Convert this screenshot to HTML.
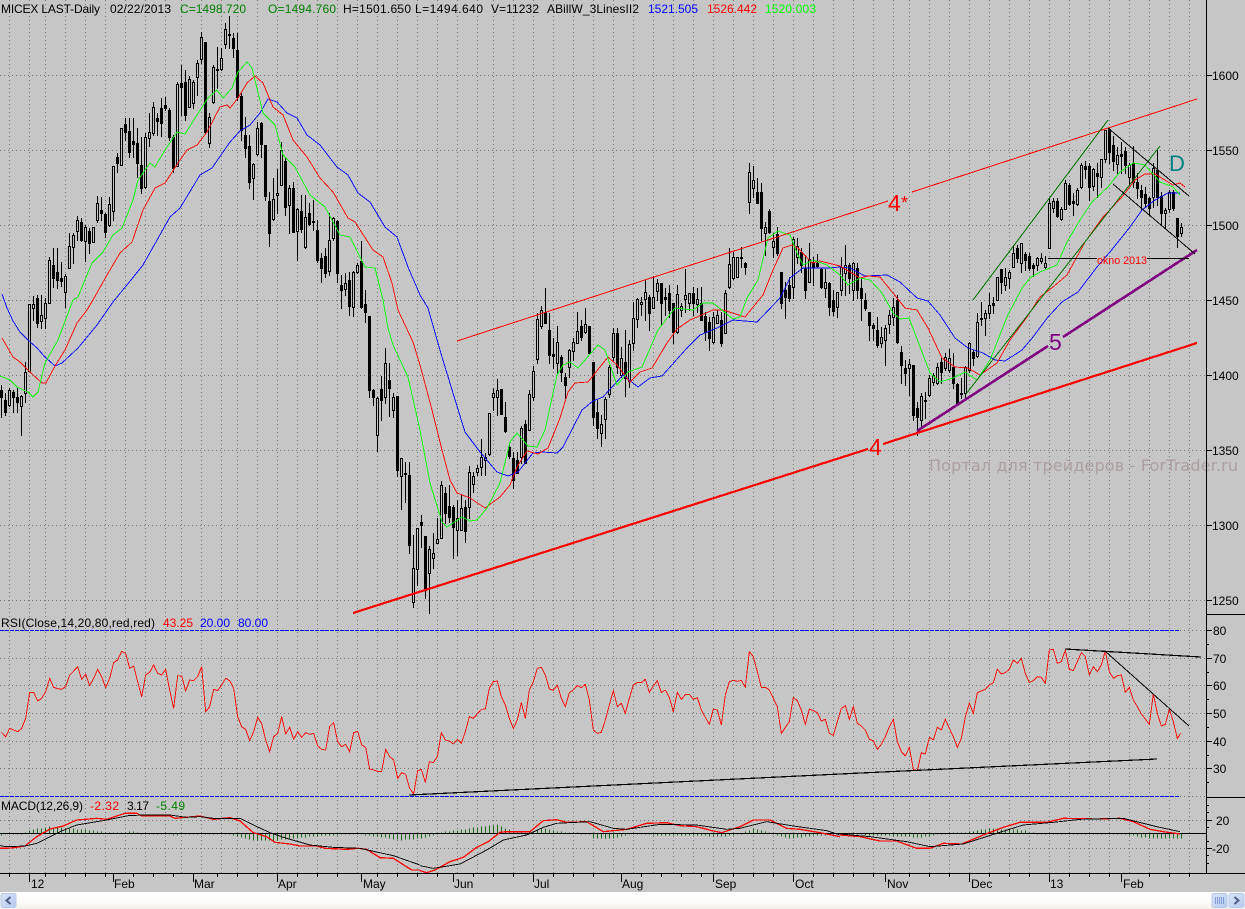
<!DOCTYPE html>
<html><head><meta charset="utf-8"><title>MICEX</title>
<style>
html,body{margin:0;padding:0;background:#c6c6c6;width:1245px;height:909px;overflow:hidden}
svg{display:block;position:absolute;left:0;top:0}
text{font-family:"Liberation Sans",Arial,sans-serif;font-size:12px}
.c{shape-rendering:crispEdges}
polyline{fill:none;shape-rendering:crispEdges;stroke-width:.9}
.z polyline{vector-effect:non-scaling-stroke}
</style></head><body>
<svg width="1245" height="909" viewBox="0 0 1245 909" xmlns="http://www.w3.org/2000/svg">
<rect width="1245" height="909" fill="#c6c6c6"/>
<path id="grid" class="c" fill="none" stroke="#777" stroke-width="1" stroke-dasharray="1 3"/>
<path id="hgrid" class="c" fill="none" stroke="#777" stroke-width="1" stroke-dasharray="1 3"/>
<path id="wick" class="c" fill="none" stroke="#000" stroke-width="1"/>
<path id="hollow" class="c" fill="#c6c6c6" stroke="#000" stroke-width="1"/>
<path id="solid" class="c" fill="#000"/>

<!-- moving averages -->
<polyline stroke="#0000ff" points="2,294 7,308 13,321 20,332 28,340 37,348 45,357 55,366 62,363 78,348 97,325 113,302 131,280 143,265 170,217 180,208 200,175 212,168 230,142 240,131 250,125 260,113 268,99 277,102 287,113 297,118 307,135 320,145 337,167 348,175 358,193 370,202 385,227 397,237 408,267 420,295 428,308 442,357 453,393 465,432 480,452 497,472 508,476 518,472 533,453 542,452 557,453 563,447 582,410 593,401 603,397 623,375 638,387 650,378 662,376 687,348 700,335 717,328 733,320 757,322 780,298 790,278 803,268 817,268 828,268 840,267 850,268 865,276 887,275 900,282 917,298 928,301 940,315 955,338 968,348 983,353 995,360 1005,361 1022,350 1033,337 1048,317 1062,302 1078,292 1097,267 1110,252 1130,227 1142,210 1155,200 1168,193 1180,193"/>
<polyline stroke="#ff0000" points="2,338 13,357 20,362 30,372 42,383 46,383 55,366 65,350 77,323 87,310 93,300 107,275 120,253 132,242 143,210 155,188 165,183 180,160 187,150 197,145 207,132 220,107 227,105 230,108 238,98 247,83 255,76 263,83 273,107 283,115 293,140 307,157 320,178 333,192 348,218 355,222 373,250 383,257 392,283 398,310 413,342 420,365 432,410 442,450 450,480 457,493 470,498 485,508 500,497 510,485 517,467 527,451 538,454 548,448 560,418 568,392 575,383 588,382 608,357 617,365 630,382 640,372 652,368 667,343 677,329 690,320 713,310 723,310 745,317 763,295 773,270 783,248 792,245 798,248 812,263 820,261 840,266 860,278 868,276 880,277 897,298 905,308 917,310 928,328 942,358 955,367 968,368 980,375 997,363 1010,340 1027,317 1040,297 1053,287 1067,275 1085,242 1103,217 1122,197 1135,180 1145,174 1155,174 1173,185 1180,183 1185,187"/>
<polyline stroke="#00ff00" points="0,376 10,380 17,387 28,392 33,397 38,392 45,363 58,340 73,300 78,297 87,275 92,263 103,252 113,235 122,228 133,200 138,180 150,163 155,167 165,150 177,132 185,134 197,115 208,98 217,90 223,98 232,88 238,72 247,62 252,68 263,113 275,125 283,155 295,167 310,195 325,207 340,235 350,237 365,267 375,268 383,300 388,328 393,345 408,377 420,430 430,483 442,522 447,527 462,517 470,521 477,520 487,508 500,483 510,442 517,433 528,446 537,447 545,430 557,375 563,365 570,362 578,368 598,345 605,350 617,385 628,372 642,367 658,330 675,308 693,310 703,303 713,303 733,319 740,317 747,298 758,280 768,238 778,231 790,235 797,253 803,265 813,260 827,265 840,275 848,285 860,278 870,280 882,293 893,313 900,319 909,318 930,373 940,382 953,378 965,372 977,380 990,360 1007,317 1022,288 1030,278 1040,272 1057,265 1067,242 1080,220 1092,202 1107,188 1120,172 1133,163 1145,165 1160,182 1173,187 1180,195"/>

<!-- trendlines -->
<g class="c" fill="none">
<path d="M457 341L888 201M912 192L1197 99" stroke="#ff0000" stroke-width="1"/>
<path d="M353 613L868 449M883 444L1197 343" stroke="#ff0000" stroke-width="2.2"/>
<path d="M917 431L1048 346M1063 337L1197 250" stroke="#800080" stroke-width="2.6"/>
<path d="M973 300L1108 120M966 394L1160 146" stroke="#007000" stroke-width="1"/>
<path d="M1108 128L1189 196M1113 184L1195 254" stroke="#000" stroke-width="1"/>
<path d="M1048 258.500H1097M1147 258.500H1189" stroke="#000" stroke-width="1"/>
</g>
<text x="888" y="211" font-size="22" style="font-size:23px" fill="#ff0000">4</text>
<text x="901" y="209" style="font-size:18px" fill="#ff0000">*</text>
<text x="869" y="455" style="font-size:23px" fill="#ff0000">4</text>
<text x="1049" y="350" style="font-size:23px" fill="#800080">5</text>
<text x="1169" y="171" style="font-size:22px" fill="#008080">D</text>
<text x="1097" y="264" textLength="50" lengthAdjust="spacingAndGlyphs" style="font-size:11px" fill="#ff0000">okno 2013</text>
<text x="929" y="471" textLength="309" lengthAdjust="spacing" style="font-size:16px;font-family:'DejaVu Sans','Liberation Sans',sans-serif" fill="#ad9f9f">Портал для трейдеров - ForTrader.ru</text>

<!-- header -->
<text x="1" y="13" textLength="99">MICEX LAST-Daily</text>
<text x="110" y="13" textLength="61">02/22/2013</text>
<text x="180" y="13" textLength="66" fill="#008000">C=1498.720</text>
<text x="268" y="13" textLength="68" fill="#008000">O=1494.760</text>
<text x="343" y="13" textLength="68">H=1501.650</text>
<text x="415" y="13" textLength="68">L=1494.640</text>
<text x="491" y="13" textLength="48">V=11232</text>
<text x="547" y="13" textLength="92">ABillW_3LinesII2</text>
<text x="648" y="13" textLength="50" fill="#0000ff">1521.505</text>
<text x="707" y="13" textLength="50" fill="#ff0000">1526.442</text>
<text x="765" y="13" textLength="51" fill="#00ff00">1520.003</text>

<!-- RSI panel -->
<g class="c" stroke="#0000ff" stroke-dasharray="4 1"><path d="M0 630.500H1180M0 796.500H1180"/></g>
<text x="1" y="627" textLength="154">RSI(Close,14,20,80,red,red)</text>
<text x="163" y="627" textLength="30" fill="#ff0000">43.25</text>
<text x="200" y="627" textLength="30" fill="#0000ff">20.00</text>
<text x="238" y="627" textLength="30" fill="#0000ff">80.00</text>
<g class="z" transform="translate(0,610) scale(.33333)">
<polyline stroke="#ff0000" points="5,367 17,380 29,355 41,360 53,365 65,355 77,325 89,247 101,247 113,273 125,265 137,245 149,205 161,232 173,236 185,238 197,230 209,195 221,183 233,170 245,208 257,193 269,227 281,205 293,178 305,200 317,233 329,205 341,158 353,150 365,124 377,130 389,175 401,168 413,215 425,260 437,195 449,187 461,165 473,190 485,195 497,178 509,240 521,295 533,197 545,198 557,243 569,210 581,212 593,200 605,170 617,305 629,290 641,238 653,242 665,225 677,205 689,212 701,235 713,320 725,350 737,358 749,392 761,365 773,322 785,340 797,390 809,425 821,380 833,370 845,320 857,372 869,352 881,388 893,365 905,382 917,368 929,373 941,370 953,408 965,418 977,420 989,350 1001,338 1013,395 1025,410 1037,403 1049,425 1061,368 1073,364 1085,405 1097,412 1109,477 1121,480 1133,484 1145,484 1157,418 1169,440 1181,450 1193,505 1205,488 1217,493 1229,535 1241,552 1253,482 1264,478"/>
</g>
<g class="z" transform="translate(420,610) scale(.33333)">
<polyline stroke="#ff0000" points="4,478 16,517 28,455 40,458 52,440 64,368 76,390 88,393 100,402 112,388 124,400 136,365 148,320 160,325 172,312 184,298 196,297 208,235 220,215 232,213 244,260 256,285 268,325 280,355 292,330 304,278 316,325 328,240 340,215 352,175 364,172 376,195 388,237 400,241 412,225 424,265 436,290 448,248 460,240 472,227 484,233 496,223 508,270 520,360 532,370 544,367 556,330 568,285 580,242 592,290 604,280 616,310 628,265 640,225 652,217 664,218 676,208 688,247 700,228 712,212 724,248 736,240 748,262 760,305 772,247 784,268 796,254 808,253 820,268 832,263 844,300 856,322 868,343 880,297 892,300 904,345 916,255 928,215 940,211 952,214 964,211 976,232 988,125 1000,140 1012,185 1024,232 1036,232 1048,240 1060,265 1072,290 1084,370 1096,352 1108,335 1120,262 1132,272 1144,300 1156,343 1168,297 1180,302 1192,308 1204,333 1216,328 1228,370 1240,376 1252,335 1264,295"/>
</g>
<g class="z" transform="translate(840,610) scale(.33333)">
<polyline stroke="#ff0000" points="4,295 16,287 28,328 40,290 52,340 64,348 76,360 88,388 100,392 112,418 124,403 136,380 148,350 160,328 172,395 184,425 196,438 208,412 220,478 232,482 244,428 256,432 268,382 280,390 292,352 304,360 316,328 328,355 340,380 352,412 364,385 376,320 388,280 400,310 412,248 424,243 436,238 448,225 460,218 472,178 484,192 496,188 508,178 520,150 532,160 544,145 556,190 568,218 580,212 592,200 604,202 616,220 628,120 640,118 652,160 664,155 676,120 688,178 700,182 712,155 724,128 736,140 748,195 760,170 772,185 784,165 796,122 808,185 820,205 832,197 844,195 856,247 868,232 880,270 892,290 904,312 916,327 928,343 940,252 952,310 964,348 976,343 988,298 1000,335 1012,385 1022,370"/>
</g>
<g class="c" fill="none" stroke="#000">
<path d="M409 795L840 774L1157 759" stroke-width="1.2"/>
<path d="M1065 649L1201 657" stroke-width="1.2"/>
<path d="M1105 651L1189 726" stroke-width="1"/>
</g>

<!-- MACD panel -->
<text x="1" y="810" textLength="82">MACD(12,26,9)</text>
<text x="90" y="810" textLength="29" fill="#ff0000">-2.32</text>
<text x="127" y="810" textLength="22">3.17</text>
<text x="156" y="810" textLength="29" fill="#008000">-5.49</text>
<path id="hist" class="c" fill="none" stroke="#1a6a1a" stroke-width="1"/>
<path class="c" d="M0 833.500H1206" stroke="#000" stroke-width="1"/>
<g class="z" transform="translate(0,610) scale(.33333)">
<polyline stroke="#ff0000" style="stroke-width:1.3" points="0,715 35,714 75,708 110,680 150,657 190,648 230,630 290,625 320,628 375,610 410,610 425,618 450,618 510,618 525,625 600,618 640,628 690,623 720,633 760,668 800,680 825,697 870,702 900,708 950,708 975,715 1040,718 1075,715 1100,718 1140,743 1180,745 1235,780 1260,780"/>
<polyline stroke="#000" points="0,707 20,710 75,708 110,700 180,665 230,645 290,635 320,630 385,617 430,615 510,615 560,622 600,620 640,625 720,625 760,645 810,668 860,685 930,705 1000,712 1080,715 1180,737 1260,765"/>
</g>
<g class="z" transform="translate(420,610) scale(.33333)">
<polyline stroke="#ff0000" style="stroke-width:1.3" points="0,782 20,788 45,780 90,755 130,742 170,712 205,695 240,667 260,665 330,665 370,632 410,629 440,637 500,635 550,665 620,658 680,640 740,638 780,647 830,650 880,663 905,668 960,650 1000,630 1050,630 1100,655 1140,658 1200,668 1260,680"/>
<polyline stroke="#000" points="0,767 40,775 120,762 200,720 250,690 320,675 370,652 410,640 510,635 580,655 620,658 720,643 830,645 920,658 960,655 1040,635 1120,648 1220,662 1260,675"/>
</g>
<g class="z" transform="translate(840,610) scale(.33333)">
<polyline stroke="#ff0000" style="stroke-width:1.3" points="0,675 60,680 120,693 170,693 230,715 270,715 310,700 365,702 430,675 490,652 540,637 620,637 670,625 770,627 840,625 880,635 930,658 970,665 1020,672"/>
<polyline stroke="#000" points="0,672 90,680 200,695 270,710 370,702 470,670 550,645 640,637 720,628 850,625 950,650 1020,665"/>
</g>

<!-- axes -->
<path id="axes" class="c" fill="none" stroke="#000" stroke-width="1"/>
<path class="c" d="M1206.500 0V873M0 873.500H1206M1206 873.500H1245M1206 614.500H1245M1206 797.500H1245" stroke="#000" fill="none"/>
<g>
<text x="1212" y="80">1600</text><text x="1212" y="155">1550</text><text x="1212" y="230">1500</text><text x="1212" y="305">1450</text><text x="1212" y="380">1400</text><text x="1212" y="455">1350</text><text x="1212" y="530">1300</text><text x="1212" y="605">1250</text>
<text x="1213" y="635">80</text><text x="1213" y="663">70</text><text x="1213" y="690">60</text><text x="1213" y="718">50</text><text x="1213" y="746">40</text><text x="1213" y="773">30</text>
<text x="1216" y="825">20</text><text x="1212" y="853">-20</text>
<text x="31" y="888">12</text><text x="114" y="888">Feb</text><text x="194" y="888">Mar</text><text x="278" y="888">Apr</text><text x="363" y="888">May</text><text x="454" y="888">Jun</text><text x="534" y="888">Jul</text><text x="622" y="888">Aug</text><text x="715" y="888">Sep</text><text x="795" y="888">Oct</text><text x="887" y="888">Nov</text><text x="971" y="888">Dec</text><text x="1050" y="888">13</text><text x="1123" y="888">Feb</text>
</g>

<!-- scrollbar -->
<defs><linearGradient id="sb" x1="0" y1="0" x2="0" y2="1"><stop offset="0" stop-color="#ffffff"/><stop offset=".6" stop-color="#fbfbf8"/><stop offset="1" stop-color="#f1f0e8"/></linearGradient>
<linearGradient id="btn" x1="0" y1="0" x2="1" y2="1"><stop offset="0" stop-color="#d8e4f8"/><stop offset="1" stop-color="#b6caf0"/></linearGradient></defs>
<rect x="0" y="892" width="1245" height="17" fill="url(#sb)"/>
<rect x="1" y="893.500" width="15" height="14" rx="2" fill="url(#btn)" stroke="#b8c8e8"/>
<path d="M10.500 897L6.500 900.500L10.500 904" fill="none" stroke="#4d6185" stroke-width="2"/>
<rect x="1212" y="893.500" width="15" height="14" rx="2" fill="url(#btn)" stroke="#b8c8e8"/>
<path d="M1215.500 897v7M1217.500 897v7M1219.500 897v7M1221.500 897v7M1223.500 897v7" stroke="#7f9bd6" stroke-width="1" fill="none"/>
<rect x="1229" y="893.500" width="15" height="14" rx="2" fill="url(#btn)" stroke="#b8c8e8"/>
<path d="M1234.500 897L1238.500 900.500L1234.500 904" fill="none" stroke="#4d6185" stroke-width="2"/>
</svg>
<script>
var D="385,390,397,417,1;393,400,412,415,1;388,390,405,406,0;390,392,397,412,1;388,397,402,412,1;395,396,406,435,0;362,372,393,402,0;304,304,371,371,0;296,304,308,320,0;295,298,323,327,1;295,315,321,328,0;298,303,318,328,0;257,260,303,303,0;248,265,278,287,1;248,272,280,288,1;262,278,281,286,1;274,276,292,307,0;233,246,268,268,0;233,235,247,263,0;216,220,231,240,0;218,222,240,241,1;225,227,241,261,0;228,231,243,253,1;227,227,242,242,0;196,203,220,222,0;197,210,213,220,1;213,214,232,237,1;197,204,225,226,0;166,166,211,220,0;153,157,163,172,1;128,128,165,165,0;118,124,132,140,1;118,131,152,157,1;118,141,144,157,1;128,143,163,177,1;137,165,188,193,1;133,137,187,188,0;113,132,138,146,0;102,107,133,135,0;113,118,121,135,1;98,108,123,136,1;97,105,108,110,1;108,110,137,140,1;135,137,168,172,1;82,84,166,166,0;65,83,87,115,1;70,82,115,120,1;76,79,107,107,0;80,82,103,108,0;60,63,77,95,0;32,37,59,63,0;42,42,132,133,1;113,117,143,147,0;65,67,102,103,0;47,69,70,88,1;48,58,69,70,0;23,29,44,48,0;16,34,35,48,1;33,38,48,57,1;33,50,97,100,1;93,96,130,140,1;117,135,148,157,1;135,146,182,188,1;163,164,178,199,0;122,128,154,155,0;122,123,144,157,1;145,145,196,200,1;192,201,233,246,1;178,199,219,220,0;169,193,195,213,0;142,150,185,185,0;158,161,207,215,1;185,188,205,233,0;182,188,232,232,1;208,209,231,260,0;195,211,229,232,1;195,217,247,248,0;203,213,224,225,1;200,221,222,230,1;220,230,260,262,1;253,258,268,282,1;248,256,273,277,1;213,240,271,275,0;217,218,238,240,0;220,221,273,282,1;275,285,290,308,1;273,283,289,295,0;272,280,306,315,1;271,272,307,316,0;263,265,272,273,0;241,261,307,308,1;290,304,312,322,1;316,316,390,397,1;389,390,397,405,1;397,398,435,451,0;376,389,400,420,1;348,363,397,403,0;363,380,388,416,1;393,397,410,417,0;396,396,470,476,1;458,458,476,509,0;462,473,474,502,1;462,475,545,553,1;535,568,602,607,0;528,528,569,585,0;515,522,525,547,1;536,536,590,598,1;546,549,573,613,0;533,553,558,568,0;518,539,543,543,0;481,485,538,538,0;487,493,513,523,1;485,506,517,522,1;505,507,527,558,1;500,518,530,555,0;495,508,530,530,0;500,507,531,542,1;466,472,507,518,0;472,476,484,492,0;465,468,472,475,0;439,457,467,475,0;453,457,460,475,0;413,413,454,455,0;388,393,397,410,0;379,390,397,415,0;389,389,414,414,1;402,417,431,432,1;443,447,456,458,1;452,458,480,488,1;452,460,473,473,1;426,428,457,463,0;420,424,463,463,1;390,394,430,430,0;366,371,397,400,0;313,319,359,363,0;306,310,326,328,0;288,312,323,323,1;313,330,355,363,1;338,354,356,368,1;326,342,363,373,0;355,357,372,381,1;373,377,385,398,1;349,350,367,377,0;338,342,351,360,0;312,331,343,343,0;320,326,337,340,1;308,324,332,333,0;326,326,353,353,1;362,362,417,425,1;400,412,428,438,1;415,424,433,446,0;397,399,419,438,0;365,367,394,397,0;328,333,357,360,0;328,333,367,373,1;347,358,375,377,0;330,362,378,396,1;340,344,381,387,0;302,318,343,350,0;298,299,319,327,0;297,302,304,315,0;280,292,299,320,0;295,297,313,330,1;276,297,308,308,0;279,283,291,300,0;283,283,303,325,1;288,297,299,315,1;285,293,310,317,1;303,303,332,343,1;285,294,332,333,0;303,306,310,316,0;269,295,299,312,0;293,293,303,310,0;287,293,303,315,1;288,299,304,312,0;287,303,320,320,1;312,316,332,340,1;317,322,338,350,1;312,317,342,343,0;310,315,323,323,0;312,320,343,346,1;290,293,333,333,0;248,264,287,288,0;252,257,278,279,0;257,257,277,277,0;247,257,258,267,1;262,263,267,274,1;163,172,202,213,0;166,180,188,197,0;178,192,203,203,1;183,192,228,240,1;222,227,233,255,0;209,211,232,233,1;233,241,247,257,0;227,234,253,255,1;272,272,303,308,1;282,290,297,318,1;277,285,298,301,1;237,239,287,298,0;238,246,257,263,0;248,252,265,272,1;255,268,290,298,1;243,259,282,282,0;257,262,267,285,1;254,263,266,267,1;268,269,287,288,1;269,282,288,297,0;282,283,307,315,1;290,300,311,315,1;292,292,307,317,0;257,267,290,295,0;245,265,273,295,0;263,265,278,293,1;262,263,290,300,0;263,268,290,298,1;277,288,298,320,1;293,300,308,310,1;312,312,325,340,1;323,325,328,340,1;317,330,345,347,1;327,337,343,347,0;325,328,340,365,0;310,315,324,333,0;298,307,317,325,0;295,300,342,343,1;346,352,365,383,1;360,368,373,385,1;359,364,368,395,0;365,365,415,420,1;402,408,417,435,1;393,396,420,428,0;392,400,401,418,1;375,378,395,396,0;373,375,382,385,0;363,367,383,384,0;358,362,372,383,1;353,357,368,370,0;349,358,370,372,0;353,367,383,388,1;383,384,403,405,1;378,393,394,398,1;366,367,393,398,0;342,343,370,372,0;350,352,358,365,1;313,322,356,357,0;302,318,319,325,1;310,313,318,335,0;293,305,313,318,0;297,303,305,313,1;277,277,300,300,0;269,269,282,293,1;268,277,285,290,0;270,272,278,288,0;245,253,267,267,0;245,248,258,262,1;243,243,263,272,0;252,254,260,270,1;253,256,268,270,1;263,265,268,276,1;257,258,265,270,0;253,258,261,263,0;256,263,267,268,0;198,203,248,248,0;198,201,208,212,0;198,201,216,217,1;207,209,219,220,0;180,183,209,209,0;183,185,204,205,1;193,201,203,215,1;188,190,204,205,0;163,165,187,188,0;161,166,169,178,1;163,166,187,200,1;168,169,186,190,0;163,173,176,197,1;159,159,177,187,0;130,130,159,162,0;127,129,152,163,1;136,145,161,170,1;147,155,164,173,0;142,154,156,173,1;147,151,165,173,1;163,165,177,185,0;146,163,182,187,1;173,182,188,198,1;185,190,197,210,1;187,194,203,207,1;197,198,208,215,1;163,168,197,207,0;150,170,197,205,1;192,196,213,224,1;208,210,213,228,0;190,192,209,212,0;190,192,208,210,1;218,218,236,247,1;223,227,233,236,0";
var w='',h='',s='';
D.split(';').forEach(function(r,i){
  var a=r.split(',').map(Number),x=1+4*i;
  w+='M'+(x+.5)+' '+a[0]+'V'+(a[3]+1);
  var t=a[1],b=a[2];
  if(a[4]){s+='M'+(x-1)+' '+t+'h3V'+(b+1)+'h-3z';}
  else{h+='M'+(x-.5)+' '+(t+.5)+'h2V'+(b+.5)+'h-2z';}
});
function S(id,d){document.getElementById(id).setAttribute('d',d);}
S('wick',w);S('hollow',h);S('solid',s);
var G=[9,29,45,65,85,105,125,145,165,181,201,221,237,257,277,297,317,337,357,377,397,417,437,457,477,493,513,533,553,573,593,613,633,653,673,693,713,733,753,773,793,813,833,853,873,893,909,929,949,969,989,1009,1029,1049,1069,1089,1109,1129,1149,1169,1189];
var g='';G.forEach(function(x){g+='M'+(x+.5)+' 0V873';});S('grid',g);
var hy=[75,150,225,300,375,450,525,600,630,658,685,713,741,768,796,820,848],hg='';
hy.forEach(function(y){hg+='M0 '+(y+.5)+'H1206';});S('hgrid',hg);
var T=[9,45,65,85,105,133,153,173,217,237,257,297,317,337,377,397,417,437,473,493,513,553,573,593,641,661,681,701,733,753,773,813,833,853,873,909,929,949,989,1009,1029,1069,1089,1109,1149,1169,1189];
var L=[29,113,193,277,361,453,533,621,713,793,885,969,1049,1121];
var A='';T.forEach(function(x){A+='M'+(x+.5)+' 873V877';});L.forEach(function(x){A+='M'+(x+.5)+' 873V882';});
[75,150,225,300,375,450,525,600,630,658,685,713,741,768,820,848].forEach(function(y){A+='M1206 '+(y+.5)+'H1212';});
[644,672,699,727,755,782,805,812,827,841,855,863].forEach(function(y){A+='M1206 '+(y+.5)+'H1209';});
S('axes',A);
var HP=[[0,-5],[25,0],[30,10],[50,20],[67,15],[87,10],[107,3],[133,5],[140,0],[173,-5],[200,-2],[227,-2],[240,-12],[257,-22],[277,-20],[317,-8],[350,-3],[367,-5],[400,-20],[420,-15],[437,-4],[445,5],[497,27],[513,5],[527,-2],[543,18],[560,5],[590,-3],[593,-15],[613,-15],[627,-3],[657,-5],[693,-5],[720,-10],[740,-2],[753,15],[773,-2],[790,-15],[820,-5],[840,-3],[873,-5],[920,-12],[940,-3],[970,5],[990,15],[1023,10],[1033,0],[1093,-3],[1123,-3],[1150,-15],[1182,-15]];
function hv(x){for(var k=0;k<HP.length-1;k++){var p=HP[k],q=HP[k+1];if(x>=p[0]&&x<=q[0])return p[1]+(q[1]-p[1])*(x-p[0])/(q[0]-p[0]);}return 0;}
var hs='';for(var i=0;i<296;i++){var x=1+4*i,v=hv(x)/3,n=Math.round(Math.abs(v))||1;hs+='M'+(x+.5)+' 833.5v'+(v>=0?-n:n);}
S('hist',hs);
</script>
</body></html>
